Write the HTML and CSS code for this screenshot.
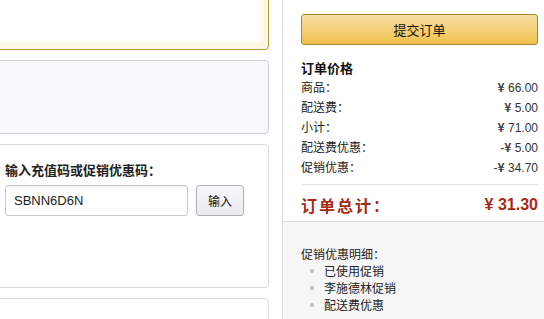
FILE: index.html
```html
<!DOCTYPE html>
<html lang="zh">
<head>
<meta charset="utf-8">
<link rel="stylesheet" href="styles.css">
</head>
<body>
<div class="page">
  <div class="left">
    <div class="card card-alert"></div>
    <div class="card card-info"></div>
    <div class="card card-code">
      <div class="code-title">输入充值码或促销优惠码：</div>
      <div class="code-row">
        <input class="code-input" type="text" value="SBNN6D6N">
        <button class="code-btn">输入</button>
      </div>
    </div>
    <div class="card card-next"></div>
  </div>
  <div class="right">
    <div class="summary">
      <button class="submit">提交订单</button>
      <div class="sum-title">订单价格</div>
      <div class="row"><span>商品：</span><span class="val"><b class="yen">¥</b> 66.00</span></div>
      <div class="row"><span>配送费：</span><span class="val"><b class="yen">¥</b> 5.00</span></div>
      <div class="row"><span>小计：</span><span class="val"><b class="yen">¥</b> 71.00</span></div>
      <div class="row"><span>配送费优惠：</span><span class="val">-<b class="yen">¥</b> 5.00</span></div>
      <div class="row"><span>促销优惠：</span><span class="val">-<b class="yen">¥</b> 34.70</span></div>
      <div class="total"><span class="total-label">订单总计：</span><span class="total-val">¥ 31.30</span></div>
    </div>
    <div class="promo">
      <div class="promo-title">促销优惠明细：</div>
      <ul class="promo-list">
        <li>已使用促销</li>
        <li>李施德林促销</li>
        <li>配送费优惠</li>
      </ul>
    </div>
  </div>
</div>
</body>
</html>
```
FILE: styles.css
```css
html, body {
  margin: 0;
  padding: 0;
  background: #fff;
  overflow: hidden;
}
body {
  font-family: "Liberation Sans", "Noto Sans CJK SC", sans-serif;
  font-size: 12px;
  color: #333;
}
.page {
  display: flex;
  width: 544px;
  height: 319px;
  overflow: hidden;
}
.left {
  width: 289px;
  margin-left: -20px;
  margin-right: 13px;
  display: flex;
  flex-direction: column;
  gap: 10px;
  margin-top: -20px;
  flex-shrink: 0;
}
.card {
  border-radius: 4px;
  border: 1px solid #ddd;
  background: #fff;
  box-sizing: border-box;
  flex-shrink: 0;
}
.card-alert {
  height: 70px;
  border-color: #b6983c;
  box-shadow: inset 0 0 0 4px #fef8e2, inset 0 0 6px 5px #fdf3d0;
}
.card-info {
  height: 74px;
  background: #f8f9fa;
  border-color: #c6d3de;
}
.card-code {
  height: 144px;
  padding: 17px 0 0 24px;
}
.code-title {
  font-family: "Noto Sans CJK SC", sans-serif;
  font-weight: bold;
  font-size: 13px;
  color: #222;
  line-height: 16px;
}
.code-row {
  display: flex;
  margin-top: 7px;
  gap: 8px;
}
.code-input {
  width: 183px;
  height: 31px;
  box-sizing: border-box;
  border: 1px solid #c9c9c9;
  border-radius: 3px;
  padding: 0 8px;
  font-family: "Liberation Sans", sans-serif;
  font-size: 13px;
  color: #222;
  margin: 0;
  box-shadow: inset 0 1px 1px rgba(0,0,0,0.05);
}
.code-btn {
  width: 48px;
  height: 31px;
  margin: 0;
  border: 1px solid #adb1b8;
  border-radius: 3px;
  background: linear-gradient(#f7f8fa, #e7e9ec);
  font-family: "Noto Sans CJK SC", sans-serif;
  font-size: 12px;
  color: #111;
  padding: 0;
}
.card-next {
  height: 40px;
}
.right {
  flex: 1;
  border-left: 1px solid #ddd;
  display: flex;
  flex-direction: column;
  margin-top: -10px;
}
.summary {
  padding: 24px 6px 0 18px;
  height: 231px;
  box-sizing: border-box;
  flex-shrink: 0;
}
.submit {
  display: block;
  width: 100%;
  height: 31px;
  margin: 0;
  border: 1px solid #a88734;
  border-radius: 3px;
  background: linear-gradient(#f7dfa5, #f0c14b);
  font-family: "Noto Sans CJK SC", sans-serif;
  font-size: 13px;
  color: #111;
  padding: 0;
}
.sum-title {
  font-family: "Noto Sans CJK SC", sans-serif;
  font-weight: bold;
  font-size: 13px;
  color: #111;
  margin-top: 14px;
  line-height: 18px;
}
.row {
  display: flex;
  justify-content: space-between;
  line-height: 20px;
  height: 20px;
  font-family: "Noto Sans CJK SC", sans-serif;
  color: #222;
}
.row:first-of-type { margin-top: 1px; }
.val {
  font-family: "Liberation Sans", sans-serif;
  color: #333;
}
.yen {
  font-family: "Noto Sans CJK SC", sans-serif;
  font-weight: bold;
  color: #444;
}
.total {
  margin-top: 7px;
  border-top: 1px solid #e3e3e3;
  padding-top: 10px;
  display: flex;
  justify-content: space-between;
  align-items: center;
  color: #a82a12;
  font-weight: bold;
  height: 20px;
  line-height: 20px;
}
.total-label {
  font-family: "Noto Sans CJK SC", sans-serif;
  font-size: 16px;
  letter-spacing: 2px;
}
.total-val {
  font-family: "Liberation Sans", sans-serif;
  font-size: 16px;
}
.promo {
  flex: 1;
  background: #f7f7f7;
  border-top: 1px solid #ddd;
  padding: 23px 0 0 18px;
  font-family: "Noto Sans CJK SC", sans-serif;
  color: #222;
}
.promo-title {
  line-height: 17px;
}
.promo-list {
  margin: 0;
  padding: 0 0 0 7px;
  list-style: none;
}
.promo-list li {
  line-height: 17px;
  position: relative;
  padding-left: 16px;
}
.promo-list li::before {
  content: "";
  position: absolute;
  left: 2px;
  top: 7px;
  width: 4px;
  height: 4px;
  border-radius: 50%;
  background: #bbb;
}
```
